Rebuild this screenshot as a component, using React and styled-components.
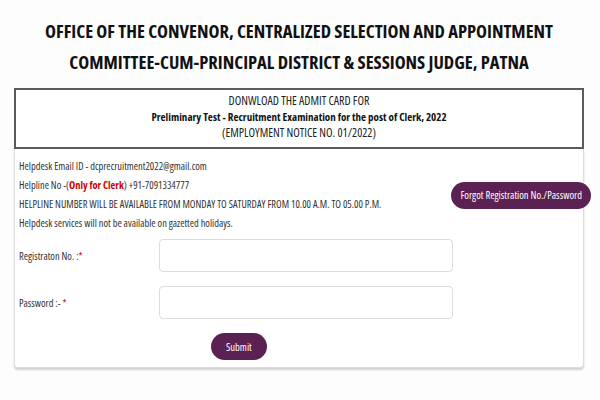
import React from 'react';
import styled, { createGlobalStyle } from "styled-components";

const GlobalStyle = createGlobalStyle`
  html, body {
    margin: 0;
    padding: 0;
    background: #fdfdfd;
  }
  body {
    font-family: "Open Sans", "Liberation Sans", sans-serif;
    font-stretch: 75%;
    color: #333;
  }
`;

const Page = styled.div`
  width: 600px;
  height: 400px;
  overflow: hidden;
  box-sizing: border-box;
  padding: 15px 16px 0 14px;
`;

const Title = styled.h1`
  margin: 0 0 11px;
  font-size: 18.5px;
  font-weight: bold;
  line-height: 31px;
  text-align: center;
  color: #111;
`;

const NoticeBox = styled.div`
  border: 2px solid #5a5a5a;
  background: #fff;
  text-align: center;
  padding: 3px 0 6px;
  font-size: 12px;
  line-height: 16px;
  color: #222;
`;

const Strong = styled.div`
  font-weight: bold;
  font-size: 11px;
  color: #111;
`;

const Card = styled.div`
  background: #fff;
  border: 1px solid #ddd;
  border-top: none;
  border-radius: 0 0 4px 4px;
  box-shadow: 0 2px 2px rgba(0, 0, 0, 0.18);
  padding: 8px 0 7px 4px;
`;

const InfoRow = styled.div`
  display: flex;
  align-items: center;
  justify-content: space-between;
`;

const Info = styled.div`
  font-size: 10.4px;
  line-height: 19px;
  color: #333;
`;

const Red = styled.span`
  color: #c00;
  font-weight: bold;
`;

const PillButton = styled.button`
  background: #5b2152;
  color: #fff;
  border: none;
  border-radius: 14px;
  font-family: inherit;
  font-stretch: 75%;
  font-size: 10.5px;
  white-space: nowrap;
  height: 27px;
  padding: ${p => p.$wide ? "0 9px" : "0 15px"};
  margin-right: ${p => p.$wide ? "-8px" : "0"};
  cursor: pointer;
`;

const Form = styled.div`
  display: grid;
  grid-template-columns: 140px 294px;
  row-gap: 14px;
  margin-top: 6px;
  align-items: center;
`;

const Label = styled.label`
  font-size: 10.4px;
  color: #333;
`;

const Star = styled.span`
  color: #c00;
`;

const Input = styled.input`
  height: 33px;
  box-sizing: border-box;
  border: 1px solid #ddd;
  border-radius: 4px;
  background: #fff;
`;

const Actions = styled.div`
  margin-top: 14px;
  padding-left: 192px;
  display: flex;
`;

export default function App() {
  return (
    <Page>
      <GlobalStyle />
      <Title>
        OFFICE OF THE CONVENOR, CENTRALIZED SELECTION AND APPOINTMENT<br />
        COMMITTEE-CUM-PRINCIPAL DISTRICT &amp; SESSIONS JUDGE, PATNA
      </Title>
      <NoticeBox>
        <div>DONWLOAD THE ADMIT CARD FOR</div>
        <Strong>Preliminary Test - Recruitment Examination for the post of Clerk, 2022</Strong>
        <div>(EMPLOYMENT NOTICE NO. 01/2022)</div>
      </NoticeBox>
      <Card>
        <InfoRow>
          <Info>
            <div>Helpdesk Email ID - dcprecruitment2022@gmail.com</div>
            <div>Helpline No -(<Red>Only for Clerk</Red>) +91-7091334777</div>
            <div>HELPLINE NUMBER WILL BE AVAILABLE FROM MONDAY TO SATURDAY FROM 10.00 A.M. TO 05.00 P.M.</div>
            <div>Helpdesk services will not be available on gazetted holidays.</div>
          </Info>
          <PillButton $wide>Forgot Registration No./Password</PillButton>
        </InfoRow>
        <Form>
          <Label>Registraton No. :<Star>*</Star></Label>
          <Input type="text" />
          <Label>Password :- <Star>*</Star></Label>
          <Input type="password" />
        </Form>
        <Actions>
          <PillButton>Submit</PillButton>
        </Actions>
      </Card>
    </Page>
  );
}
